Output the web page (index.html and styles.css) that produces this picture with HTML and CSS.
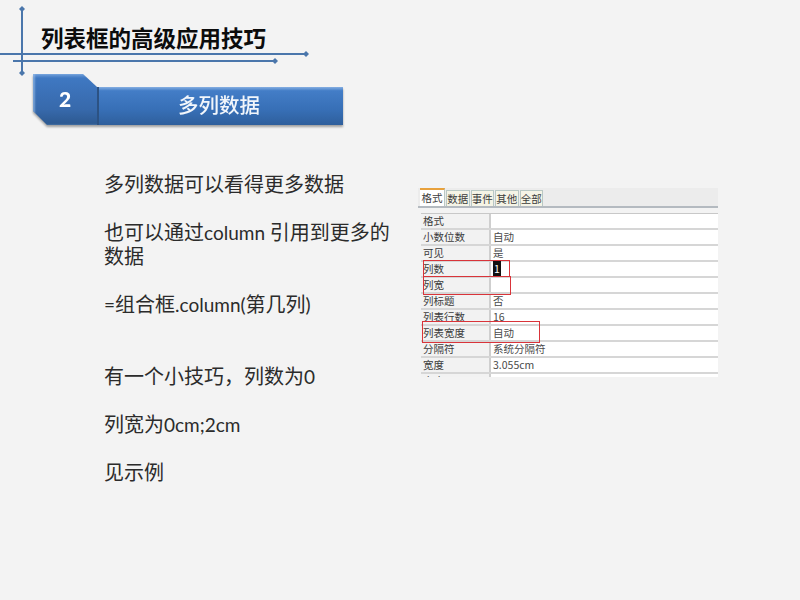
FILE: index.html
```html
<!DOCTYPE html>
<html lang="zh">
<head>
<meta charset="utf-8">
<title>列表框的高级应用技巧</title>
<link rel="stylesheet" href="styles.css">
</head>
<body>
<div class="slide">
  <svg class="rules" width="320" height="80" viewBox="0 0 320 80">
    <g stroke="#4a76ab" stroke-width="2">
      <line x1="22" y1="9" x2="22" y2="73"/>
      <line x1="0" y1="54" x2="306" y2="54"/>
      <line x1="13" y1="61" x2="275" y2="61"/>
    </g>
    <g fill="#4a76ab">
      <path d="M22 6l3 3-3 3-3-3z"/>
      <path d="M22 70l3 3-3 3-3-3z"/>
      <path d="M306 51l3 3-3 3-3-3z"/>
      <path d="M275 58l3 3-3 3-3-3z"/>
    </g>
  </svg>
  <h1 class="title">列表框的高级应用技巧</h1>
  <div class="banner">
    <div class="badge">2</div>
    <div class="bar">多列数据</div>
  </div>
  <div class="content">
    <div class="text">
      <p>多列数据可以看得更多数据</p>
      <p>也可以通过<span class="lat">column </span>引用到更多的数据</p>
      <p class="gap"><span class="lat">=</span>组合框<span class="lat">.column(</span>第几列<span class="lat">)</span></p>
      <p>有一个小技巧，列数为<span class="lat">0</span></p>
      <p>列宽为<span class="lat">0cm;2cm</span></p>
      <p>见示例</p>
    </div>
    <div class="shot">
      <div class="tabs">
        <span class="tab active">格式</span><span class="tab">数据</span><span class="tab">事件</span><span class="tab">其他</span><span class="tab">全部</span>
      </div>
      <div class="sheet">
        <div class="row"><span class="key">格式</span><span class="val"></span></div>
        <div class="row"><span class="key">小数位数</span><span class="val">自动</span></div>
        <div class="row"><span class="key">可见</span><span class="val">是</span></div>
        <div class="row"><span class="key">列数</span><span class="val"><b class="sel">1</b></span></div>
        <div class="row"><span class="key">列宽</span><span class="val"></span></div>
        <div class="row"><span class="key">列标题</span><span class="val">否</span></div>
        <div class="row"><span class="key">列表行数</span><span class="val">16</span></div>
        <div class="row"><span class="key">列表宽度</span><span class="val">自动</span></div>
        <div class="row"><span class="key">分隔符</span><span class="val">系统分隔符</span></div>
        <div class="row"><span class="key">宽度</span><span class="val">3.055cm</span></div>
        <div class="row"><span class="key">高度</span><span class="val">0.582cm</span></div>
      </div>
      <i class="mark mark-a"></i>
      <i class="mark mark-b"></i>
      <i class="mark mark-c"></i>
    </div>
  </div>
</div>
</body>
</html>
```
FILE: styles.css
```css
* { box-sizing: border-box; }
html, body { margin: 0; padding: 0; }
body { width: 800px; height: 600px; overflow: hidden; background: #f3f3f3; }
.slide {
  position: relative;
  width: 800px;
  height: 600px;
  font-family: Lato, "Noto Sans CJK SC", sans-serif;
  color: #2b2b2b;
}
.rules { position: absolute; left: 0; top: 0; }
.title {
  position: relative;
  margin: 0;
  padding: 23px 0 0 41px;
  height: 73px;
  font-family: "Noto Sans CJK SC", sans-serif;
  font-size: 22.5px;
  line-height: 28px;
  font-weight: 700;
  color: #0c0c0c;
}
.banner {
  position: relative;
  display: flex;
  align-items: flex-end;
  margin-left: 33px;
  width: 310px;
  height: 52px;
  filter: drop-shadow(0 2px 1px rgba(60, 60, 60, .45));
}
.badge {
  width: 64px;
  height: 51px;
  padding: 11px 0 0 0;
  text-align: center;
  font-size: 21px;
  line-height: 28px;
  font-weight: 900;
  color: #fff;
  background: linear-gradient(#6f9fda 0, #3f78c2 8%, #3769ab 70%, #2c588f 100%);
  box-shadow: inset 2px 0 2px rgba(160, 195, 235, .6);
  clip-path: polygon(0 0, 50px 0, 64px 13px, 64px 51px, 14px 51px, 0 37px);
}
.bar {
  width: 246px;
  height: 38px;
  padding-right: 4px;
  text-align: center;
  font-size: 20.5px;
  line-height: 37px;
  font-weight: 500;
  color: #f2f6fb;
  border-left: 2px solid #2c5283;
  background: linear-gradient(#86afe2 0, #437dc7 10%, #376fb6 60%, #2f5f9c 100%);
}
.content {
  display: flex;
  align-items: flex-start;
  margin-top: 47px;
  padding-left: 104px;
}
.text {
  width: 288px;
  font-size: 20px;
  line-height: 24px;
}
.text p { margin: 0 0 24px; }
.text p.gap { margin-bottom: 48px; }
.lat { font-size: 19px; line-height: 0; }
.shot {
  position: relative;
  width: 300px;
  height: 189px;
  margin: 16px 0 0 26px;
  overflow: hidden;
  font-family: "Noto Sans CJK SC", sans-serif;
  font-size: 10.5px;
  color: #3c3c3c;
}
.tabs {
  display: flex;
  align-items: flex-end;
  gap: 1px;
  height: 20px;
  padding-left: 2px;
  background: #ececec;
  border-bottom: 2px solid #b4bac0;
}
.tab {
  width: 23.5px;
  height: 16px;
  line-height: 15px;
  text-align: center;
  white-space: nowrap;
  background: #f5f4e6;
  border: 1px solid #b9c8c4;
  border-bottom: 0;
}
.tab.active {
  height: 18px;
  width: 25px;
  background: #fff;
  border-top: 2px solid #e8a13c;
  border-left: 0;
}
.sheet { margin: 5px 0 0 3px; background: #fff; border-top: 1px solid #c8c8c8; }
.row {
  display: flex;
  height: 16px;
  line-height: 14px;
  border-bottom: 2px solid #d6d6d6;
}
.key {
  width: 70px;
  padding-left: 2px;
  background: #f2f2f2;
  border-right: 2px solid #cfcfcf;
}
.val { padding-left: 2px; color: #4a4a4a; }
.sel { font-weight: 400; color: #fff; background: #111; padding: 0 1px; }
.mark { position: absolute; border: 1.5px solid #d9343a; }
.mark-a { left: 5px; top: 72px; width: 87px; height: 17px; }
.mark-b { left: 5px; top: 88px; width: 88px; height: 19px; }
.mark-c { left: 4px; top: 133px; width: 118px; height: 22px; }
```
